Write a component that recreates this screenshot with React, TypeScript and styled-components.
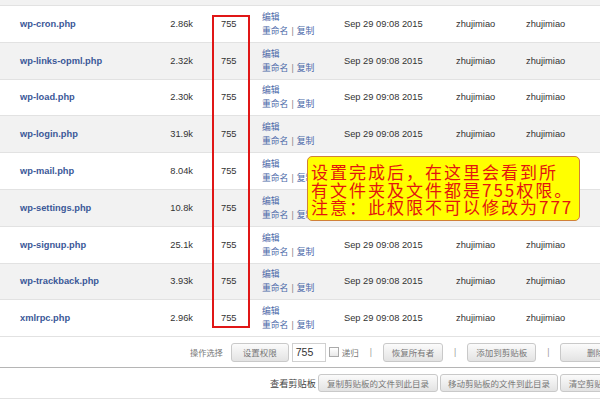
import styled, { createGlobalStyle } from 'styled-components'

const GlobalStyle = createGlobalStyle`
  html, body {
    margin: 0;
    padding: 0;
    background: #ffffff;
    overflow: hidden;
  }
  body {
    font-family: "Liberation Sans", "Noto Sans CJK SC", sans-serif;
  }
`

const CJK = `"Liberation Sans", "Noto Sans CJK SC", sans-serif`

const files = [
  { name: 'wp-cron.php', size: '2.86k' },
  { name: 'wp-links-opml.php', size: '2.32k' },
  { name: 'wp-load.php', size: '2.30k' },
  { name: 'wp-login.php', size: '31.9k' },
  { name: 'wp-mail.php', size: '8.04k' },
  { name: 'wp-settings.php', size: '10.8k' },
  { name: 'wp-signup.php', size: '25.1k' },
  { name: 'wp-trackback.php', size: '3.93k' },
  { name: 'xmlrpc.php', size: '2.96k' },
]

const Page = styled.div`
  position: relative;
  width: 640px;
  height: 400px;
  overflow: hidden;
`

const TopStrip = styled.div`
  height: 5px;
  background: #f2f2f2;
  border-bottom: 1px solid #e2e2e2;
`

const Row = styled.div<{ $alt: boolean }>`
  display: grid;
  grid-template-columns: 150px 50px 62px 82px 112px 70px 1fr;
  align-items: center;
  height: 35.8px;
  border-bottom: 1px solid #e2e2e2;
  background: ${(p) => (p.$alt ? '#f2f2f2' : '#ffffff')};
  font-size: 9.3px;
  color: #333;
`

const Name = styled.a`
  padding-left: 20px;
  font-weight: bold;
  color: #3b5898;
  text-decoration: none;
`

const Size = styled.div`
  text-align: right;
  padding-right: 7px;
`

const Perm = styled.div`
  padding-left: 21px;
`

const Actions = styled.div`
  display: flex;
  flex-direction: column;
  gap: 1px;
  font-family: ${CJK};
  font-size: 8.8px;
  line-height: 13px;
  color: #4a68a8;
  margin-top: 1px;
`

const Pipe = styled.span`
  color: #888;
  margin: 0 3px;
`

const Cell = styled.div`
  white-space: nowrap;
`

const PermBox = styled.div`
  position: absolute;
  left: 212px;
  top: 15px;
  width: 38px;
  height: 313px;
  box-sizing: border-box;
  border: 2px solid #e01616;
  pointer-events: none;
`

const Note = styled.div`
  position: absolute;
  left: 307px;
  top: 156px;
  width: 273px;
  height: 65px;
  box-sizing: border-box;
  padding: 6px 0 0 3px;
  background: #ffff00;
  border: 1px solid #d0803a;
  border-radius: 5px;
  color: #e3150f;
  font-family: "Noto Sans CJK SC", sans-serif;
  font-size: 17px;
  letter-spacing: 2px;
  line-height: 17.5px;
  white-space: nowrap;
`

const OpBar = styled.div`
  display: flex;
  align-items: center;
  height: 30px;
  padding-left: 190px;
  border-bottom: 1px solid #b5b5b5;
  font-family: ${CJK};
  font-size: 8.5px;
  color: #777;
  white-space: nowrap;
`

const ClipBar = styled(OpBar)`
  padding-left: 270px;
  border-bottom: 1px solid #e2e2e2;
  gap: 2px;
`

const BarLabel = styled.span<{ $dark?: boolean }>`
  color: ${(p) => (p.$dark ? '#444' : '#777')};
  font-size: ${(p) => (p.$dark ? '9.2px' : '8.2px')};
  margin-right: ${(p) => (p.$dark ? '0' : '8px')};
`

const Button = styled.button<{ $w: number; $h?: number }>`
  width: ${(p) => p.$w}px;
  height: ${(p) => p.$h ?? 19}px;
  flex: none;
  padding: 0;
  border: 1px solid #c9c9c9;
  border-radius: 3px;
  background: linear-gradient(#fbfbfb, #e3e3e3);
  color: #777;
  font-family: ${CJK};
  font-size: 8.5px;
`

const PermInput = styled.div`
  width: 34px;
  height: 19px;
  box-sizing: border-box;
  margin-left: 3px;
  border: 1px solid #d0d0d0;
  background: #fff;
  color: #333;
  font-size: 10.5px;
  line-height: 17px;
  padding-left: 3px;
`

const Check = styled.span`
  width: 8px;
  height: 8px;
  margin-left: 3px;
  border: 1px solid #aaa;
  background: linear-gradient(#fff, #e8e8e8);
`

const Recursive = styled.span`
  margin-left: 3px;
`

const Sep = styled.span`
  margin: 0 11px;
  color: #999;
  font-family: "Liberation Sans", sans-serif;
`

export default function App() {
  return (
    <Page>
      <GlobalStyle />
      <TopStrip />
      {files.map((f, i) => (
        <Row key={f.name} $alt={i % 2 === 1}>
          <Name>{f.name}</Name>
          <Size>{f.size}</Size>
          <Perm>755</Perm>
          <Actions>
            <span>编辑</span>
            <span>
              重命名<Pipe>|</Pipe>复制
            </span>
          </Actions>
          <Cell>Sep 29 09:08 2015</Cell>
          <Cell>zhujimiao</Cell>
          <Cell>zhujimiao</Cell>
        </Row>
      ))}
      <OpBar>
        <BarLabel>操作选择</BarLabel>
        <Button $w={58}>设置权限</Button>
        <PermInput>755</PermInput>
        <Check />
        <Recursive>递归</Recursive>
        <Sep>|</Sep>
        <Button $w={60}>恢复所有者</Button>
        <Sep>|</Sep>
        <Button $w={69}>添加到剪贴板</Button>
        <Sep>|</Sep>
        <Button $w={70}>删除</Button>
      </OpBar>
      <ClipBar>
        <BarLabel $dark>查看剪贴板</BarLabel>
        <Button $w={120} $h={18}>复制剪贴板的文件到此目录</Button>
        <Button $w={118} $h={18}>移动剪贴板的文件到此目录</Button>
        <Button $w={60} $h={18}>清空剪贴板</Button>
      </ClipBar>
      <PermBox />
      <Note>
        设置完成后，在这里会看到所
        <br />
        有文件夹及文件都是755权限。
        <br />
        注意：此权限不可以修改为777
      </Note>
    </Page>
  )
}
